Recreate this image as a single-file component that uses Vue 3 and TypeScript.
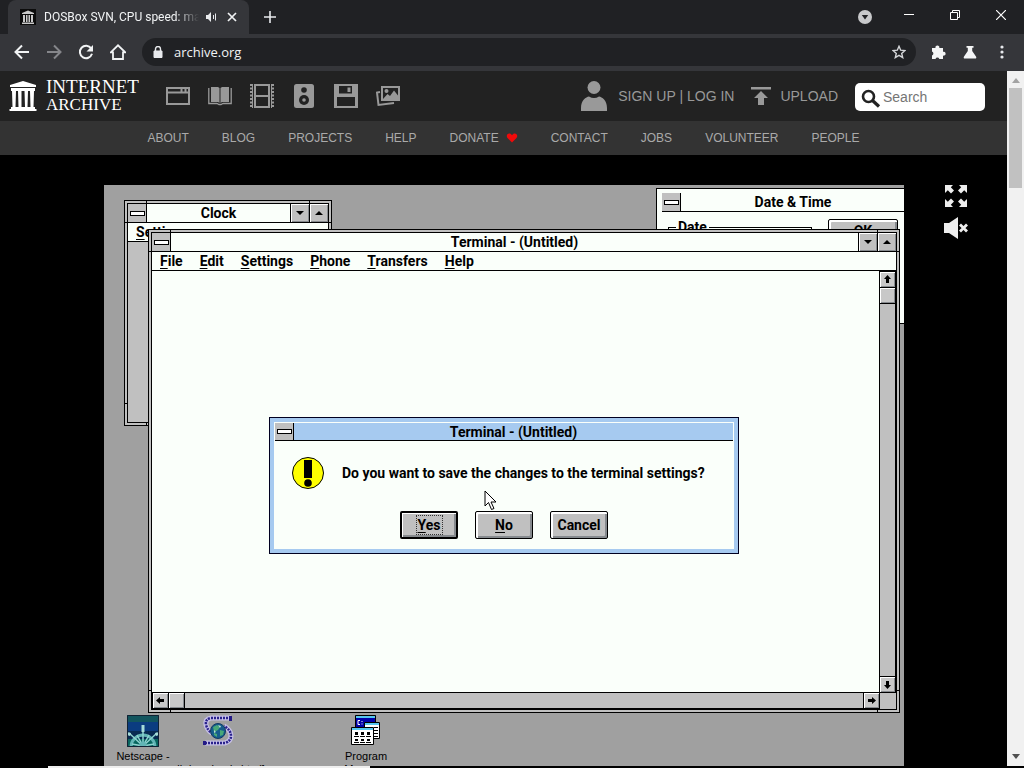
<script setup lang="ts">
const navLinks: string[] = ['ABOUT', 'BLOG', 'PROJECTS', 'HELP', 'DONATE', 'CONTACT', 'JOBS', 'VOLUNTEER', 'PEOPLE']
const menus: string[] = ['File', 'Edit', 'Settings', 'Phone', 'Transfers', 'Help']
const answers: { label: string; key: boolean; main: boolean }[] = [
  { label: 'Yes', key: true, main: true },
  { label: 'No', key: true, main: false },
  { label: 'Cancel', key: false, main: false },
]
</script>

<template>
  <div class="browser">
    <header class="tabstrip">
      <div class="tab">
        <svg class="favicon" width="16" height="16" viewBox="0 0 16 16">
          <rect width="16" height="16" fill="#0c0c0c" />
          <path d="M2 4 8 1.500 14 4V5H2zM3 6h2v7H3zM6 6h1.500v7H6zM8.500 6H10v7H8.500zM11 6h2v7h-2zM2 13.500h12V15H2z" fill="#c9c9c9" />
        </svg>
        <span class="tab-title">DOSBox SVN, CPU speed: ma</span>
        <button class="bare" aria-label="Mute tab">
          <svg width="12" height="12" viewBox="0 0 12 12"><path d="M0 4h2l3-3v10L2 8H0z" fill="#e8eaed" /><path d="M7.500 4v4M9.500 2.500v7" stroke="#e8eaed" fill="none" /></svg>
        </button>
        <button class="bare" aria-label="Close tab">
          <svg width="10" height="10" viewBox="0 0 10 10"><path d="M1 1l8 8M9 1l-8 8" stroke="#f1f3f4" stroke-width="1.700" /></svg>
        </button>
      </div>
      <button class="bare new-tab" aria-label="New tab">
        <svg width="12" height="12" viewBox="0 0 12 12"><path d="M6 0v12M0 6h12" stroke="#e8eaed" stroke-width="1.600" /></svg>
      </button>
      <div class="window-controls">
        <button class="bare" aria-label="Search tabs">
          <svg width="14" height="14" viewBox="0 0 14 14"><circle cx="7" cy="7" r="7" fill="#c8c9cb" /><path d="M3.800 5h6.400L7 9.500z" fill="#202124" /></svg>
        </button>
        <button class="bare" aria-label="Minimize"><svg width="10" height="10" viewBox="0 0 10 10"><path d="M0 4.500h10" stroke="#fff" /></svg></button>
        <button class="bare" aria-label="Restore"><svg width="10" height="10" viewBox="0 0 10 10"><path d="M.5 2.500h7v7h-7zM2.500 2.500v-2h7v7h-2" stroke="#fff" fill="none" /></svg></button>
        <button class="bare" aria-label="Close"><svg width="10" height="10" viewBox="0 0 10 10"><path d="M0 0l10 10M10 0L0 10" stroke="#fff" stroke-width="1.200" /></svg></button>
      </div>
    </header>

    <div class="toolbar">
      <div class="nav-buttons">
        <button class="bare" aria-label="Back"><svg width="16" height="16" viewBox="0 0 16 16"><path d="M15 8H2M8 1.500 1.500 8 8 14.500" stroke="#f1f3f4" stroke-width="2" fill="none" /></svg></button>
        <button class="bare" aria-label="Forward"><svg width="16" height="16" viewBox="0 0 16 16"><path d="M1 8h13M8 1.500 14.500 8 8 14.500" stroke="#85868a" stroke-width="2" fill="none" /></svg></button>
        <button class="bare" aria-label="Reload"><svg width="16" height="16" viewBox="0 0 16 16"><path d="M13.200 4.400A6.200 6.200 0 1 0 14 9.800" stroke="#f1f3f4" stroke-width="2" fill="none" /><path d="M15 1v6.500H8.500z" fill="#f1f3f4" /></svg></button>
        <button class="bare" aria-label="Home"><svg width="16" height="16" viewBox="0 0 16 16"><path d="M.8 8.300 8 1.300l7.200 7H13V15H3V8.300z" stroke="#f1f3f4" stroke-width="1.800" fill="none" /></svg></button>
      </div>
      <div class="address">
        <svg width="10" height="12" viewBox="0 0 10 12"><path d="M1 5h8v6.500H1z" fill="#e8eaed" stroke="#e8eaed" /><path d="M2.500 5V3a2.500 2.500 0 0 1 5 0v2" stroke="#e8eaed" stroke-width="1.400" fill="none" /></svg>
        <input type="text" value="archive.org" aria-label="Address" />
        <button class="bare" aria-label="Bookmark"><svg width="14" height="14" viewBox="0 0 14 14"><path d="m7 1.300 1.700 3.900 4.200.4-3.200 2.800 1 4.200L7 10.400l-3.700 2.200 1-4.200L1.100 5.600l4.200-.4z" stroke="#d4d6d9" stroke-width="1.400" fill="none" /></svg></button>
      </div>
      <div class="extensions">
        <button class="bare" aria-label="Extensions"><svg width="16" height="16" viewBox="0 0 16 16"><path d="M2 4h3.500a2 2 0 1 1 3.800 0H13v3.800a2 2 0 1 1 0 3.800V15H9.300a2 2 0 0 0-3.800 0H2v-3.600a2 2 0 0 0 0-3.800z" fill="#f4f5f6" /></svg></button>
        <button class="bare" aria-label="Labs"><svg width="14" height="14" viewBox="0 0 14 14"><path d="M3.500 1h7v1.800H9.200V6l3.800 5.500Q14 13.500 12 13.500H2Q0 13.500 1 11.500L4.800 6V2.800H3.500z" fill="#f4f5f6" /></svg></button>
        <button class="bare" aria-label="Menu"><svg width="14" height="14" viewBox="0 0 14 14"><circle cx="7" cy="2" r="1.600" fill="#e8eaed" /><circle cx="7" cy="7" r="1.600" fill="#e8eaed" /><circle cx="7" cy="12" r="1.600" fill="#e8eaed" /></svg></button>
      </div>
    </div>

    <div class="viewport">
      <div class="page">
        <div class="masthead">
          <a class="brand" href="#">
            <svg width="28" height="32" viewBox="0 0 28 32">
              <path d="M14 1 27 5v2H1V5zM2 8h24v3H2zM3 11h4l-.5 16h-3zM9 11h3.500v16H9.500zM15.500 11H19l-.5 16H16zM21 11h4l-.5 16h-3zM2 27h24v2H2zM.5 29h27v2H.5z" fill="#fff" />
            </svg>
            <span class="wordmark"><span class="word-top">INTERNET</span><span class="word-low">ARCHIVE</span></span>
          </a>
          <nav class="media" aria-label="Media">
            <a href="#" aria-label="Web"><svg width="24" height="24" viewBox="0 0 24 24"><path d="M1 4h22v16H1zM1 8.500h22M15.500 4v4M19.500 4v4" stroke="#999" stroke-width="2" fill="none" /></svg></a>
            <a href="#" aria-label="Texts"><svg width="24" height="24" viewBox="0 0 24 24"><path d="M3 3h7l1.500 1v15L10 18H3zM21 3h-7l-1.500 1v15l1.500-1h7z" fill="#999" /><path d="M.8 4v15.500H9l2 1h2l2-1h8.200V4" stroke="#999" stroke-width="1.300" fill="none" /></svg></a>
            <a href="#" aria-label="Video"><svg width="24" height="24" viewBox="0 0 24 24"><path d="M1 0v24M23 0v24" stroke="#999" stroke-width="2" stroke-dasharray="2 1.500" /><path d="M5 1h14v22H5zM5 12h14" stroke="#999" stroke-width="2" fill="none" /><path d="M2.500 0v24M21.500 0v24" stroke="#999" stroke-width="1" /></svg></a>
            <a href="#" aria-label="Audio"><svg width="24" height="24" viewBox="0 0 24 24"><rect x="2" width="20" height="24" rx="2.500" fill="#999" /><circle cx="12" cy="6" r="2.800" fill="#222" /><circle cx="12" cy="16" r="5" fill="#222" /><circle cx="12" cy="16" r="1.800" fill="#999" /></svg></a>
            <a href="#" aria-label="Software"><svg width="24" height="24" viewBox="0 0 24 24"><path fill-rule="evenodd" d="M0 0h24v24H0zM5 2v7.500h13V2zM3 13v9h18v-9z" fill="#999" /><path d="M13.500 3.500h3V8h-3z" fill="#999" /></svg></a>
            <a href="#" aria-label="Images"><svg width="24" height="24" viewBox="0 0 24 24"><path d="M6 3h17v13H6z" stroke="#999" stroke-width="2" fill="none" /><path d="M4 8 1 8.500 2.500 21 18 19" stroke="#999" stroke-width="2" fill="none" /><circle cx="10.500" cy="7" r="2" fill="#999" /><path d="m7 15 4.500-5 2.500 2 4-5.500 4 5V15z" fill="#999" /></svg></a>
          </nav>
          <div class="account">
            <svg width="26" height="32" viewBox="0 0 26 32"><circle cx="13" cy="7.500" r="6.500" fill="#999" /><path d="M0 31v-3c0-8 5-11 8-11.500q5 3 10 0c3 .5 8 3.500 8 11.500v3z" fill="#999" /></svg>
            <a class="account-link" href="#">SIGN UP | LOG IN</a>
            <a class="upload" href="#">
              <svg width="20" height="20" viewBox="0 0 20 20"><path d="M0 1h20v2.500H0zM10 5l7 7h-4v7H7v-7H3z" fill="#999" /></svg>UPLOAD
            </a>
            <label class="search">
              <svg width="20" height="20" viewBox="0 0 20 20"><circle cx="7.500" cy="7.500" r="5.500" stroke="#222" stroke-width="2.600" fill="none" /><path d="m11.500 11.500 6.500 6" stroke="#222" stroke-width="3.200" /></svg>
              <input type="text" placeholder="Search" aria-label="Search" />
            </label>
          </div>
        </div>

        <nav class="subnav" aria-label="About the archive">
          <a v-for="link in navLinks" :key="link" href="#">{{ link }}<svg v-if="link === 'DONATE'" width="12" height="10" viewBox="0 0 12 10"><path d="M6 9.500 1.500 5C-.5 2.500 2-.5 4.500.8Q5.500 1.300 6 2.300 6.500 1.300 7.500.8C10-.5 12.500 2.500 10.500 5z" fill="#f00a0a" /></svg></a>
        </nav>

        <main class="stage">
          <div class="desktop">
            <section class="win frame clock">
              <div class="inner">
                <div class="titlebar">
                  <button class="sys" aria-label="Clock control menu"></button>
                  <span class="title">Clock</span>
                  <button class="cap" aria-label="Minimize Clock"><svg width="8" height="4" viewBox="0 0 8 4"><path d="M0 0h8L4 4z" /></svg></button>
                  <button class="cap" aria-label="Maximize Clock"><svg width="8" height="4" viewBox="0 0 8 4"><path d="M0 4h8L4 0z" /></svg></button>
                </div>
                <div class="menubar"><button><u>S</u>ettings</button></div>
                <div class="clock-face"></div>
              </div>
            </section>

            <section class="win datetime">
              <div class="titlebar">
                <button class="sys" aria-label="Date and Time control menu"></button>
                <span class="title">Date &amp; Time</span>
              </div>
              <div class="datetime-body">
                <fieldset><legend>Date</legend></fieldset>
                <button class="push">OK</button>
              </div>
            </section>

            <section class="win frame terminal">
              <div class="inner">
                <div class="titlebar">
                  <button class="sys" aria-label="Terminal control menu"></button>
                  <span class="title">Terminal - (Untitled)</span>
                  <button class="cap" aria-label="Minimize Terminal"><svg width="8" height="4" viewBox="0 0 8 4"><path d="M0 0h8L4 4z" /></svg></button>
                  <button class="cap" aria-label="Maximize Terminal"><svg width="8" height="4" viewBox="0 0 8 4"><path d="M0 4h8L4 0z" /></svg></button>
                </div>
                <div class="menubar">
                  <button v-for="m in menus" :key="m"><u>{{ m[0] }}</u>{{ m.slice(1) }}</button>
                </div>
                <div class="screen">
                  <div class="paper"></div>
                  <div class="vscroll">
                    <button class="step" aria-label="Scroll up"><svg width="9" height="9" viewBox="0 0 9 9"><path d="M4.500 0 8 4H6v4H3V4H1z" /></svg></button>
                    <div class="step"></div>
                    <button class="step last" aria-label="Scroll down"><svg width="9" height="9" viewBox="0 0 9 9"><path d="M4.500 9 8 5H6V1H3v4H1z" /></svg></button>
                  </div>
                  <div class="hscroll">
                    <button class="step" aria-label="Scroll left"><svg width="9" height="9" viewBox="0 0 9 9"><path d="M0 4.500 4 1v2h4v3H4v2z" /></svg></button>
                    <div class="step"></div>
                    <button class="step last" aria-label="Scroll right"><svg width="9" height="9" viewBox="0 0 9 9"><path d="M9 4.500 5 1v2H1v3h4v2z" /></svg></button>
                  </div>
                  <div class="corner"></div>
                </div>
              </div>
            </section>

            <section class="win dialog" role="dialog" aria-label="Save changes">
              <div class="titlebar">
                <button class="sys" aria-label="Dialog control menu"></button>
                <span class="title">Terminal - (Untitled)</span>
              </div>
              <div class="message">
                <svg width="32" height="32" viewBox="0 0 32 32"><circle cx="16" cy="16" r="15.500" fill="#ff0" stroke="#000" /><path d="M12 3h8v18h-8z" /><circle cx="16" cy="26" r="3.800" /></svg>
                <span>Do you want to save the changes to the terminal settings?</span>
              </div>
              <div class="answers">
                <button v-for="a in answers" :key="a.label" class="push" :class="{ main: a.main }">
                  <span><u v-if="a.key">{{ a.label[0] }}</u><template v-else>{{ a.label[0] }}</template>{{ a.label.slice(1) }}</span>
                </button>
              </div>
            </section>

            <svg class="pointer" width="13" height="21" viewBox="0 0 13 21"><path d="M1 1v15l3.500-3.500L7.500 19.500l2.500-1-3-6.500h5z" fill="#fff" stroke="#000" /></svg>

            <figure class="program netscape">
              <svg width="32" height="32" viewBox="0 0 32 32">
                <path d="M0 0h32v32H0z" fill="#082a52" /><path d="M0 0h32v7H0z" fill="#12555e" /><path d="M0 7h32v9H0z" fill="#0b3c80" /><path d="M0 24h32v8H0z" fill="#08665f" />
                <path d="M4 32a12 12 0 0 1 24 0" stroke="#62b5b5" stroke-width="3" fill="none" />
                <path d="M16 32V11M16 31 2 18M16 31l14-13M16 31 5 29M16 31l11-2M16 31l-6-11M16 31l6-11" stroke="#8ed2cf" stroke-width="1.500" />
                <circle cx="16" cy="30" r="3.500" fill="#62b5b5" /><path d="M14.500 10h3v7h-3zM0 17l4 1-1 3-3-1zM32 17l-4 1 1 3 3-1z" fill="#a6dbd8" />
                <path d="M.5.5h31v31H.5z" stroke="#123" fill="none" />
              </svg>
              <figcaption>Netscape -</figcaption>
            </figure>
            <figure class="program trumpet">
              <svg width="32" height="32" viewBox="0 0 32 32">
                <path d="M29 3H9Q3 4 4 10q2 6 6 8M3 28h20q6-2 6-7 0-6-7-10" stroke="#c5bfe6" stroke-width="5" fill="none" />
                <path d="M29 3H9Q3 4 4 10q2 6 6 8M3 28h20q6-2 6-7 0-6-7-10" stroke="#29218c" stroke-width="2.500" stroke-dasharray="2 1" fill="none" />
                <path d="M27 1h3v5h-3zM1 26h3v4H1z" fill="#241b86" />
                <circle cx="16" cy="16" r="7.500" fill="#155d8c" stroke="#123a63" /><path d="M11 12l4-2 3 2-2 3-4 2zM18 15l4 1-1 4-3 1zM12 18l3 1v3l-3-2z" fill="#48a878" /><path d="M16 10l3 1-1 2zM12 15l2 2-2 1z" fill="#bde0d2" />
              </svg>
              <figcaption>&nbsp;<br />all downloads.html]</figcaption>
            </figure>
            <figure class="program progman">
              <svg width="32" height="32" viewBox="0 0 32 32">
                <path d="M5.500.5h20v12h-20z" fill="#0000a8" stroke="#000" /><path d="M6 1h19v2H6z" fill="#55c8f0" /><path d="M10 5.500H8v4h2M12 6v1M12 8.500v1" stroke="#fff" fill="none" />
                <path d="M14.500 7.500h15v16h-15z" fill="#fff" stroke="#000" /><path d="M15 8h14v2H15z" fill="#55c8f0" /><path d="M24 12.500h4M24 15.500h4M24 18.500h4M24 21.500h4" stroke="#000" />
                <path d="M1.500 12.500h22v17h-22z" fill="#fff" stroke="#000" /><path d="M2 13h21v2H2z" fill="#55c8f0" />
                <path d="M5 17h3v3H5zM11 17h3v3h-3zM17 17h3v3h-3zM5 24h3v2H5zM11 24h3v2h-3zM17 24h3v2h-3z" /><path d="M4 21.500h5M10 21.500h5M16 21.500h5M4 27.500h5M10 27.500h5M16 27.500h5" stroke="#000" />
              </svg>
              <figcaption>Program<br />Manager</figcaption>
            </figure>
          </div>

          <div class="player-tools">
            <button class="bare" aria-label="Full screen">
              <svg width="22" height="22" viewBox="0 0 22 22"><path d="M0 0h8L5.800 2.200 9 5.400 6 8.400 2.800 5.200 0 8zM22 0v8l-2.800-2.800L16 8.400l-3-3 3.200-3.200L14 0zM0 22v-8l2.800 2.800L6 13.600l3 3-3.200 3.200L8 22zM22 22h-8l2.200-2.200-3.200-3.200 3-3 3.200 3.200L22 14z" fill="#eee" /></svg>
            </button>
            <button class="bare" aria-label="Unmute">
              <svg width="24" height="22" viewBox="0 0 24 22"><path d="M0 6h5l9-6v22l-9-6H0z" fill="#eee" /><path d="m16 7.500 7 7M23 7.500l-7 7" stroke="#eee" stroke-width="2.800" /></svg>
            </button>
          </div>
        </main>
      </div>

      <div class="scrollbar">
        <svg width="8" height="5" viewBox="0 0 8 5"><path d="M0 5 4 0l4 5z" fill="#a3a3a3" /></svg>
        <div class="thumb"></div>
        <svg class="down" width="8" height="5" viewBox="0 0 8 5"><path d="M0 0h8L4 5z" fill="#505050" /></svg>
      </div>
    </div>
    <div class="edge"><div class="edge-light"></div></div>
  </div>
</template>

<style>
html, body { margin: 0; background: #000; }
</style>

<style scoped>
* { box-sizing: border-box; }
svg { display: block; flex: none; }
button { font: inherit; color: inherit; padding: 0; margin: 0; border: 0; background: none; }
a { color: inherit; text-decoration: none; }
.browser { display: flex; flex-direction: column; height: 100vh; min-height: 500px; overflow: hidden; font-family: "Liberation Sans", Arial, sans-serif; }
.bare { display: grid; place-items: center; }

.tabstrip { display: flex; flex: none; height: 34px; background: #202124; align-items: stretch; padding-left: 8px; }
.tab { display: flex; align-items: center; width: 241px; padding: 0 12px; background: #35363a; border-radius: 8px 8px 0 0; color: #f1f3f4; font: 12px/18px Roboto, "Open Sans", sans-serif; }
.tab-title { flex: 1; min-width: 0; margin: 0 2px 0 8px; overflow: hidden; white-space: nowrap; -webkit-mask-image: linear-gradient(90deg, #000 85%, transparent); mask-image: linear-gradient(90deg, #000 85%, transparent); }
.tab .bare { width: 18px; margin-left: 2px; }
.tab .bare + .bare { margin-right: -4px; }
.new-tab { width: 42px; }
.window-controls { display: flex; margin-left: auto; }
.window-controls .bare { width: 46px; height: 29px; }
.window-controls .bare:first-child { width: 42px; height: 34px; }

.toolbar { display: flex; flex: none; align-items: center; height: 37px; background: #35363a; padding: 0 6px 2px; }
.nav-buttons { display: flex; }
.nav-buttons .bare { width: 32px; height: 28px; }
.address { display: flex; flex: 1; align-items: center; gap: 11px; height: 28px; margin: 0 6px 0 8px; padding: 0 10px 0 11px; background: #202124; border-radius: 14px; }
.address input { flex: 1; min-width: 0; border: 0; padding: 0; outline: 0; background: none; color: #f1f3f4; font: 13px/20px "Open Sans", "Noto Sans", sans-serif; }
.extensions { display: flex; }
.extensions .bare { width: 32px; height: 28px; }

.viewport { display: flex; flex: 1; min-height: 0; }
.page { display: flex; flex: 1; flex-direction: column; min-width: 0; background: #000; }
.masthead { display: flex; flex: none; align-items: center; height: 50px; padding: 0 22px 0 9px; background: #222; }
.brand { display: flex; gap: 9px; align-items: center; width: 157px; color: #fff; }
.wordmark { display: flex; flex-direction: column; font-family: "Liberation Serif", serif; line-height: 18px; }
.word-top { font-size: 19px; }
.word-low { font-size: 17px; }
.media { display: flex; gap: 18px; }
.account { display: flex; align-items: center; margin-left: auto; color: #999; font-size: 14px; }
.account-link { margin: 0 17px 0 11px; }
.upload { display: flex; align-items: center; gap: 9px; margin-right: 17px; }
.search { display: flex; align-items: center; gap: 2px; width: 130px; height: 28px; margin-top: 2px; padding: 0 6px; border-radius: 5px; background: #fff; }
.search svg { margin-top: 3px; }
.search input { width: 90px; min-width: 0; border: 0; padding: 0; outline: 0; background: none; font: 14px/20px "Liberation Sans", Arial, sans-serif; }
.search input::placeholder { color: #757575; opacity: 1; }
.subnav { display: flex; flex: none; justify-content: center; align-items: center; gap: 33px; height: 34px; background: #333; color: #aaa; font-size: 12px; }
.subnav a { display: flex; align-items: center; gap: 7px; }

.stage { display: grid; flex: 1; min-height: 0; grid-template-columns: 104px minmax(0, 1fr) 103px; padding-top: 30px; }
.desktop { grid-column: 2; position: relative; overflow: hidden; background: #a0a0a0; color: #000; font: bold 14px/16px Roboto, "Liberation Sans", sans-serif; }
.player-tools { display: flex; flex-direction: column; align-items: center; gap: 10px; }

.win { position: absolute; display: flex; flex-direction: column; border: 1px solid #000; background: #fafffa; }
.frame { padding: 2px; background: linear-gradient(#000, #000) 0 21px / 100% 1px no-repeat, linear-gradient(#000, #000) 0 calc(100% - 21px) / 100% 1px no-repeat, linear-gradient(#000, #000) 21px 0 / 1px 100% no-repeat, linear-gradient(#000, #000) calc(100% - 21px) 0 / 1px 100% no-repeat, #c0c0c0; }
.inner { display: flex; flex: 1; flex-direction: column; min-height: 0; border: 1px solid #000; background: #fafffa; }
.titlebar { display: flex; flex: none; height: 19px; border-bottom: 1px solid #000; }
.title { flex: 1; text-align: center; line-height: 18px; }
.sys { display: grid; place-items: center; width: 19px; border-right: 1px solid #000; background: #c0c0c0; }
.sys::after { content: ""; width: 13px; height: 3px; border: 1px solid #000; background: #fff; }
.cap { display: grid; place-items: center; width: 19px; border-left: 1px solid #000; background: #c0c0c0; box-shadow: inset 1px 1px #fff, inset -1px -1px #868a8e; }
.menubar { display: flex; flex: none; gap: 17px; height: 19px; padding: 0 8px; border-bottom: 1px solid #000; line-height: 18px; }
u { text-underline-offset: 2px; text-decoration-thickness: 1px; }

.clock { left: 20px; top: 15px; width: 208px; height: 226px; }
.clock-face { flex: 1; background: #c0c0c0; }
.datetime { left: 552px; top: 3px; width: 255px; height: 136px; padding: 4px 5px; }
.datetime-body { display: flex; justify-content: space-between; padding: 7px 7px 0 6px; }
.datetime fieldset { width: 144px; height: 80px; margin: 0; padding: 0; border: 1px solid #000; }
.datetime legend { margin-left: 7px; padding: 0 2px; }
.datetime-body .push { width: 70px; height: 24px; }
.terminal { left: 44px; top: 44px; width: 752px; height: 484px; }
.screen { display: grid; flex: 1; min-height: 0; grid-template: minmax(0, 1fr) 17px / minmax(0, 1fr) 17px; }
.vscroll { display: flex; flex-direction: column; border: solid #000; border-width: 1px 1px 0 1px; background: #c0c0c0; }
.hscroll { display: flex; border: solid #000; border-width: 1px 0 1px 1px; background: #c0c0c0; }
.corner { border: solid #000; border-width: 1px 0 0 1px; background: #c0c0c0; }
.step { display: grid; flex: none; place-items: center; background: #c8c8c8; box-shadow: inset 1px 1px #fff, inset -1px -1px #868a8e; }
.vscroll .step { height: 16px; border-bottom: 1px solid #000; }
.vscroll .last { margin-top: auto; border-top: 1px solid #000; border-bottom: 0; }
.hscroll .step { width: 16px; border-right: 1px solid #000; }
.hscroll .last { margin-left: auto; border-left: 1px solid #000; border-right: 0; }

.dialog { left: 165px; top: 232px; width: 470px; height: 137px; border-color: #000020; background: #fafffa; box-shadow: inset 0 0 0 4px #a6caf0; padding: 5px; }
.dialog .titlebar { background: #a6caf0; height: 18px; }
.message { display: flex; align-items: center; gap: 18px; padding: 16px 17px 0; white-space: nowrap; }
.answers { display: flex; justify-content: center; gap: 17px; margin-top: 22px; }
.push { width: 58px; height: 28px; border: 1px solid #000; border-radius: 2px; background: #c0c0c0; box-shadow: inset 2px 2px #fff, inset -2px -2px #868a8e; }
.main { border-width: 2px; box-shadow: inset 1px 1px #fff, inset -2px -2px #868a8e; }
.main span { outline: 1px dotted #333; outline-offset: 1px; }
.pointer { position: absolute; left: 380px; top: 305px; }

.program { position: absolute; top: 530px; display: flex; flex-direction: column; align-items: center; gap: 3px; width: 120px; margin: 0; font: 11px/13px "Liberation Sans", Arial, sans-serif; text-align: center; white-space: nowrap; }
.netscape { left: -21px; }
.trumpet { left: 54px; }
.progman { left: 202px; }

.scrollbar { display: flex; flex-direction: column; align-items: center; flex: none; width: 17px; padding: 7px 0; background: #f1f1f1; }
.thumb { width: 13px; height: 100px; margin-top: 5px; background: #c1c1c1; }
.down { margin-top: auto; }
.edge { display: flex; flex: none; height: 2px; padding-left: 48px; background: #000; }
.edge-light { width: 33%; background: #eee; }
</style>
